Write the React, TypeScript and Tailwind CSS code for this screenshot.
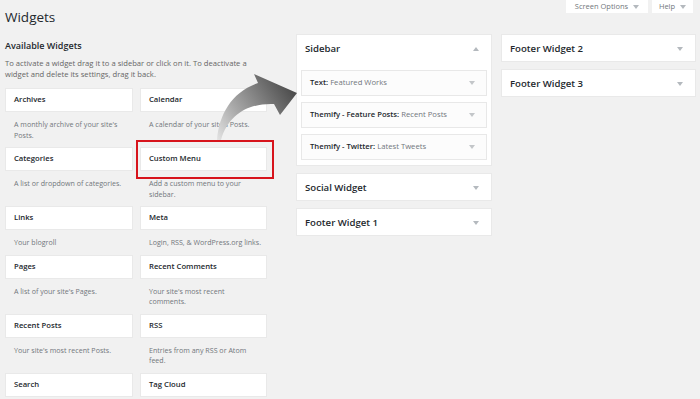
import React from "react";

const cards: [string, string[]][] = [
  ["Archives", ["A monthly archive of your site's", "Posts."]],
  ["Calendar", ["A calendar of your site's Posts."]],
  ["Categories", ["A list or dropdown of categories."]],
  ["Custom Menu", ["Add a custom menu to your", "sidebar."]],
  ["Links", ["Your blogroll"]],
  ["Meta", ["Login, RSS, & WordPress.org links."]],
  ["Pages", ["A list of your site's Pages."]],
  ["Recent Comments", ["Your site's most recent", "comments."]],
  ["Recent Posts", ["Your site's most recent Posts."]],
  ["RSS", ["Entries from any RSS or Atom", "feed."]],
  ["Search", []],
  ["Tag Cloud", []],
];

function Tri({ up = false, color = "#a7aaad" }: { up?: boolean; color?: string }) {
  return (
    <svg width="6" height="4" viewBox="0 0 6 4" className="shrink-0">
      {up ? (
        <path d="M0 4 L3 0 L6 4 Z" fill={color} />
      ) : (
        <path d="M0 0 L6 0 L3 4 Z" fill={color} />
      )}
    </svg>
  );
}

function Panel({ title, children, up = false }: { title: string; children?: React.ReactNode; up?: boolean }) {
  return (
    <div className="bg-white border border-[#e9e9e9]">
      <div className="h-[26px] pt-[2px] pl-[8px] pr-[12px] flex items-center justify-between">
        <span className="text-[9.6px] font-semibold text-[#23282d] leading-none">{title}</span>
        <Tri up={up} color="#b4b9be" />
      </div>
      {children}
    </div>
  );
}

function Inner({ bold, rest }: { bold: string; rest: string }) {
  return (
    <div className="h-[26px] bg-[#fcfcfc] border border-[#e8e8e8] flex items-center justify-between pl-[8px] pr-[11px]">
      <span className="text-[7.7px] leading-none whitespace-nowrap">
        <span className="font-semibold text-[#23282d]">{bold}</span>
        <span className="text-[#72777c]"> {rest}</span>
      </span>
      <Tri color="#c3c6c9" />
    </div>
  );
}

export default function App() {
  return (
    <div
      className="relative w-[700px] h-[399px] overflow-hidden bg-[#f1f1f1]"
      style={{ fontFamily: '"Open Sans", "Noto Sans", sans-serif' }}
    >
      {/* header */}
      <div className="h-[34px] flex items-start justify-between">
        <h1 className="pl-[5px] pt-[7.5px] text-[13.5px] leading-[18px] text-[#23282d] font-normal">Widgets</h1>
        <div className="flex gap-[4px] pr-[7px]">
          <div className="h-[13px] w-[82px] bg-white flex items-center justify-center gap-[5px] text-[7.5px] text-[#72777c] leading-none">
            <span>Screen Options</span>
            <Tri color="#b4b9be" />
          </div>
          <div className="h-[13px] w-[41px] bg-white flex items-center justify-center gap-[5px] text-[7.5px] text-[#72777c] leading-none">
            <span>Help</span>
            <Tri color="#b4b9be" />
          </div>
        </div>
      </div>

      {/* main */}
      <div className="flex items-start pl-[5px]">
        {/* left */}
        <div className="w-[262px] pt-[6px]">
          <h2 className="text-[9px] leading-[12px] font-semibold text-[#23282d]">Available Widgets</h2>
          <p className="mt-[6px] text-[7.65px] leading-[11px] text-[#666] whitespace-nowrap">
            To activate a widget drag it to a sidebar or click on it. To deactivate a
            <br />
            widget and delete its settings, drag it back.
          </p>
          <div className="mt-[8px] grid grid-cols-[128px_127px] gap-x-[7px]">
            {cards.map(([t, d]) => (
              <div key={t} className="flex flex-col">
                <div className="h-[24px] bg-white border border-[#e9e9e9] flex items-center pl-[8px]">
                  <span className="text-[7.7px] font-semibold text-[#23282d] leading-none whitespace-nowrap">{t}</span>
                </div>
                {d.length > 0 && (
                  <div className="pl-[9px] pt-[7px] pb-[7px] text-[7.1px] leading-[10.5px] text-[#72777c] whitespace-nowrap">
                    {d.map((l, i) => (
                      <div key={i}>{l}</div>
                    ))}
                  </div>
                )}
              </div>
            ))}
          </div>
        </div>

        {/* middle */}
        <div className="ml-[29px] w-[196px] flex flex-col gap-[7px]">
          <Panel title="Sidebar" up>
            <div className="px-[4px] pt-[9px] pb-[5px] flex flex-col gap-[6px]">
              <Inner bold="Text:" rest="Featured Works" />
              <Inner bold="Themify - Feature Posts:" rest="Recent Posts" />
              <Inner bold="Themify - Twitter:" rest="Latest Tweets" />
            </div>
          </Panel>
          <Panel title="Social Widget" />
          <Panel title="Footer Widget 1" />
        </div>

        {/* right */}
        <div className="ml-[9px] w-[195px] flex flex-col gap-[7px]">
          <Panel title="Footer Widget 2" />
          <Panel title="Footer Widget 3" />
        </div>
      </div>

      {/* red highlight */}
      <div className="absolute left-[136px] top-[140px] w-[138px] h-[39px] border-2 border-[#d7141c] pointer-events-none" />

      {/* arrow */}
      <svg className="absolute left-0 top-0 pointer-events-none" width="700" height="399" viewBox="0 0 700 399">
        <defs>
          <linearGradient id="ag" gradientUnits="userSpaceOnUse" x1="218" y1="140" x2="292" y2="92">
            <stop offset="0" stopColor="#e2e2e2" />
            <stop offset="0.35" stopColor="#a9a9a9" />
            <stop offset="1" stopColor="#4f4f4f" />
          </linearGradient>
        </defs>
        <path
          d="M217 140 C219 114 232 92 258 83 L254 74 L297 93 L280 115 L274 104 C252 103 229 112 221 140 Z"
          fill="url(#ag)"
        />
      </svg>
    </div>
  );
}
